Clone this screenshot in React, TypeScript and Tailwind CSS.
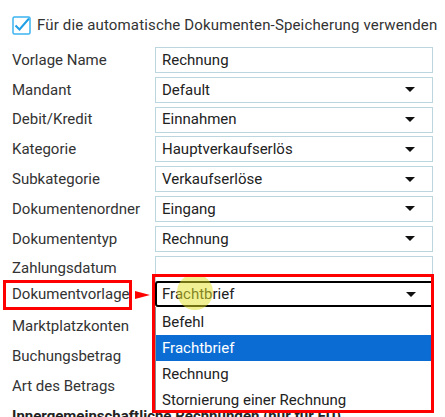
import React from "react";

type Row = { label: string; value?: string; select?: boolean };

const rows: Row[] = [
  { label: "Vorlage Name", value: "Rechnung" },
  { label: "Mandant", value: "Default", select: true },
  { label: "Debit/Kredit", value: "Einnahmen", select: true },
  { label: "Kategorie", value: "Hauptverkaufserlös", select: true },
  { label: "Subkategorie", value: "Verkaufserlöse", select: true },
  { label: "Dokumentenordner", value: "Eingang", select: true },
  { label: "Dokumententyp", value: "Rechnung", select: true },
  { label: "Zahlungsdatum", value: "" },
];

const options = ["Befehl", "Frachtbrief", "Rechnung", "Stornierung einer Rechnung"];

function Caret() {
  return (
    <svg width="10" height="5" viewBox="0 0 10 5" className="shrink-0">
      <polygon points="0,0 10,0 5,5" fill="#111" />
    </svg>
  );
}

export default function App() {
  return (
    <div className="relative w-[445px] h-[417px] overflow-hidden bg-white font-['Roboto',sans-serif] text-[15px] text-[#333]">
      <div className="pl-[12px] pt-[16px]">
        <div className="flex items-center gap-[6px] h-[19px]">
          <svg width="19" height="19" viewBox="0 0 19 19">
            <rect x="1" y="1" width="17" height="17" rx="1.5" fill="white" stroke="#3cb4f0" strokeWidth="1.5" />
            <polyline points="3.5,9.5 7.5,13.5 17,2.5" fill="none" stroke="#1e9fe6" strokeWidth="2" />
          </svg>
          <span className="tracking-[0.15px] text-[#333]">Für die automatische Dokumenten-Speicherung verwenden</span>
        </div>

        <div className="mt-[12px] flex flex-col gap-[3.8px]">
          {rows.map((r) => (
            <div key={r.label} className="flex items-center">
              <div className="w-[143px]">{r.label}</div>
              <div className="w-[278px] h-[26px] border border-[#bcd6df] flex items-center justify-between pl-[6px] pr-[17px] text-[#222]">
                <span>{r.value}</span>
                {r.select && <Caret />}
              </div>
            </div>
          ))}
          <div className="flex items-center -mt-[4px]">
            <div className="w-[143px]">Dokumentvorlage</div>
            <div className="w-[279px] h-[26px] border-2 border-black rounded-[3px] flex items-center justify-between pl-[5px] pr-[16px] text-[#222]">
              <span>Frachtbrief</span>
              <Caret />
            </div>
          </div>
        </div>

        <div className="mt-[4px] flex flex-col">
          <div className="h-[30px] flex items-center">Marktplatzkonten</div>
          <div className="h-[30px] flex items-center">Buchungsbetrag</div>
          <div className="h-[30px] flex items-center">Art des Betrags</div>
          <div className="h-[30px] flex items-center font-bold text-[#222]">
            Innergemeinschaftliche Rechnungen (nur für EU)
          </div>
        </div>
      </div>

      {/* open dropdown list */}
      <div className="absolute left-[155px] top-[307px] w-[278px] h-[106px] bg-white border-l border-[#8a8a8a] pt-[2px] text-[#222]">
        {options.map((o) => (
          <div
            key={o}
            className={
              o === "Frachtbrief"
                ? "h-[26px] flex items-center pl-[6px] bg-[#0b6dd4] text-white"
                : "h-[26px] flex items-center pl-[6px]"
            }
          >
            {o}
          </div>
        ))}
      </div>

      {/* cursor highlight */}
      <div className="absolute left-[177px] top-[274px] w-[36px] h-[36px] rounded-full bg-[rgba(228,228,40,0.5)]" />

      {/* annotations */}
      <div className="absolute left-[3px] top-[280px] w-[129px] h-[30px] border-[3px] border-[#ff0000]" />
      <div className="absolute left-[152px] top-[274px] w-[282px] h-[139px] border-[3px] border-[#ff0000]" />
      <svg className="absolute left-[135px] top-[291px]" width="15" height="8" viewBox="0 0 15 8">
        <polygon points="0,0 15,4 0,8" fill="#ff0000" />
      </svg>
    </div>
  );
}
